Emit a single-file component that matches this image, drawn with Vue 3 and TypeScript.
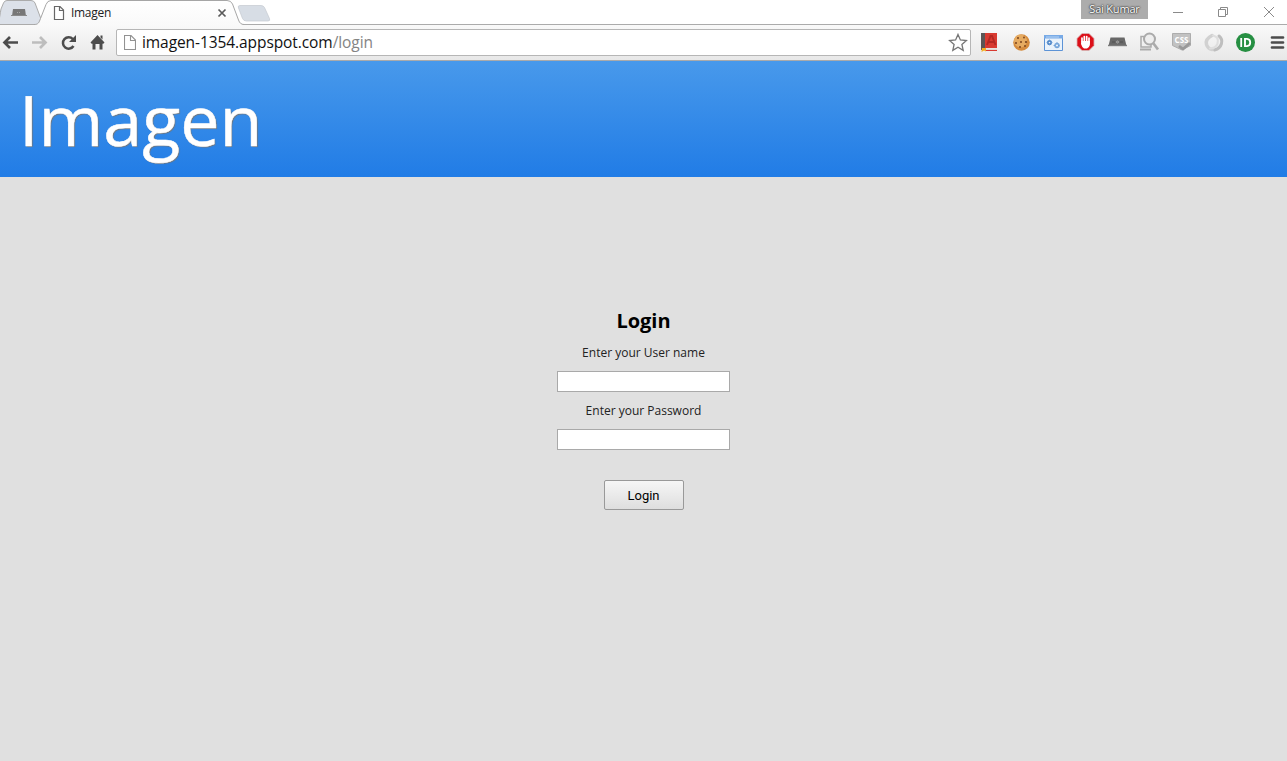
<script setup lang="ts">
import { ref } from 'vue'

const username = ref('')
const password = ref('')
</script>

<template>
  <div class="window">
    <div class="tabstrip">
      <svg class="tabs" width="290" height="26" viewBox="0 0 290 26" fill="none">
        <defs>
          <linearGradient id="activeTab" x1="0" y1="0" x2="0" y2="1">
            <stop offset="0" stop-color="#ffffff" />
            <stop offset="1" stop-color="#f9f9f9" />
          </linearGradient>
        </defs>
        <path d="M-4 24.500C-1 24.500 -1 20 1 9L3.500 3Q4.500.500 7 .500H31Q34 .500 35 3L41 19Q42 24 38 24.500Z" fill="#dce1e9" stroke="#ababab" />
        <path d="M238.500 8Q237.500 5.500 240 5.500H261Q263.500 5.500 264.500 7.500L269.500 18.500Q270.500 21 268 21H246.500Q243.500 21 242.500 18.500Z" fill="#d7dde5" stroke="#c4c9d0" stroke-width=".7" />
        <path d="M34 26V24.500C38.500 24.500 39 22.500 40.500 18.500L46 4.500Q47.500.500 51 .500H227Q231 .500 232.500 4L238.500 20Q240 24.500 244 24.500V26Z" fill="url(#activeTab)" />
        <path d="M34 24.500C38.500 24.500 39 22.500 40.500 18.500L46 4.500Q47.500.500 51 .500H227Q231 .500 232.500 4L238.500 20Q240 24.500 244 24.500" stroke="#a6a6a6" />
        <path d="M13 9H25L26 16H12Z" fill="#777" />
        <path d="M11 15.500H27" stroke="#898989" />
        <path d="M17 12.500H21" stroke="#a6a6a6" stroke-dasharray="1 1" />
        <path d="M54.500 6.500H60L63.500 10V19.500H54.500ZM59.500 6.500V10.500H63.500" fill="#fff" stroke="#666" stroke-width="1.200" />
        <path d="M218.500 9.500L225.500 16.500M225.500 9.500L218.500 16.500" stroke="#5a5a5a" stroke-width="1.700" />
      </svg>
      <span class="tab-title">Imagen</span>
      <span class="profile">Sai Kumar</span>
      <svg class="controls" width="139" height="24" viewBox="0 0 139 24" fill="none" stroke="#8a8a8a">
        <path d="M25 12.500H35M70.500 9.500H77.500V16.500H70.500ZM72.500 9.500V7.500H79.500V14.500H77.500M116 7L126 17M126 7L116 17" />
      </svg>
    </div>

    <div class="toolbar">
      <svg class="nav" width="116" height="34" viewBox="0 0 116 34" fill="none">
        <path d="M18 17.500H5M10 12L4.500 17.500L10 23" stroke="#4c4c4c" stroke-width="2.700" />
        <path d="M32 17.500H45M40 12L45.500 17.500L40 23" stroke="#bdbdbd" stroke-width="2.700" />
        <path d="M73.500 21A5.700 5.700 0 1 1 72.800 14" stroke="#4c4c4c" stroke-width="2.500" />
        <path d="M76 10V17H69Z" fill="#4c4c4c" />
        <path d="M97.500 10L104.500 17.500L103 19L102.500 18.500V24.500H99.500V19H95.500V24.500H92.500V18.500L92 19L90.500 17.500ZM100.500 10.500H102.500V14.500L100.500 12.500Z" fill="#4c4c4c" />
      </svg>
      <div class="address">
        <svg class="page-icon" width="12" height="15" viewBox="0 0 12 15" fill="#fff" stroke="#929292">
          <path d="M.5.5H7L11.500 5V14.500H.5ZM6.500.5V5.500H11.500" stroke-width="1.100" />
        </svg>
        <span class="url">imagen-1354.appspot.com<span class="path">/login</span></span>
        <svg class="star" width="20" height="19" viewBox="0 0 20 19" fill="none">
          <path d="M10 1.400L12.400 6.900L18.400 7.500L13.900 11.500L15.200 17.400L10 14.300L4.800 17.400L6.100 11.500L1.600 7.500L7.600 6.900Z" stroke="#767676" stroke-width="1.300" />
        </svg>
      </div>
      <svg class="extensions" width="316" height="34" viewBox="971 25 316 34" fill="none">
        <g>
          <path d="M981 33H997V48H981Z" fill="#d83a31" />
          <path d="M981 33H985V50H981Z" fill="#5b5555" />
          <path d="M985 48.500H997V50H985Z" fill="#e3d8d3" />
          <path d="M986 50.500H997" stroke="#d83a31" />
          <path d="M987 45L990.500 36H992L995.500 45M988.500 42H994" stroke="#b42823" stroke-width="1.900" />
          <path d="M982 48H986V51.500L984 50.500L981.500 52Z" fill="#f5ae20" />
        </g>
        <g>
          <circle cx="1021.500" cy="42.500" r="8.300" fill="#d58b3d" />
          <circle cx="1020.500" cy="41" r="6.500" fill="#e6ab61" />
          <g fill="#79421c">
            <circle cx="1018" cy="38" r="1" /><circle cx="1024" cy="37.500" r=".9" />
            <circle cx="1021" cy="42" r="1" /><circle cx="1026" cy="42" r="1.100" />
            <circle cx="1016" cy="43" r="1" /><circle cx="1020" cy="47" r="1" />
            <circle cx="1025" cy="46" r=".9" />
          </g>
        </g>
        <g>
          <path d="M1044.500 35.500H1062.500V50.500H1044.500Z" fill="#e9f2fb" stroke="#5c93d6" />
          <path d="M1044 35H1063V38.500H1044Z" fill="#78aae6" />
          <path d="M1046 37H1059" stroke="#b6d4f5" />
          <circle cx="1049.500" cy="42.500" r="1.700" stroke="#4e87c9" stroke-width="1.700" />
          <circle cx="1057" cy="45.500" r="1.900" stroke="#79a9dd" stroke-width="1.700" />
          <path d="M1046.500 42.500H1052.500M1049.500 39.500V45.500M1053.500 45.500H1060.500M1057 42V49" stroke="#6798d2" stroke-width=".8" stroke-dasharray="1.500 3" />
        </g>
        <g>
          <path d="M1082 33.500H1089L1094 38.500V45.500L1089 50.500H1082L1077 45.500V38.500Z" fill="#dc1019" stroke="#d6b2b2" stroke-width=".8" />
          <path d="M1082 41V38M1084.300 42V36.500M1086.700 42V36.500M1089 43V38" stroke="#fff" stroke-width="1.700" stroke-linecap="round" />
          <path d="M1081.200 41H1089.900V45Q1089 48 1087 48.500H1084Q1082 47.500 1081 44Z" fill="#fff" />
        </g>
        <g>
          <path d="M1110.500 37.500H1124.500L1126.500 46H1108.500Z" fill="#686868" />
          <path d="M1108 45.500H1127" stroke="#7c7c7c" stroke-width="1.400" />
          <circle cx="1117.500" cy="42" r="1" stroke="#b8b8b8" stroke-width=".8" />
          <path d="M1112 42H1115M1120 42H1123" stroke="#505050" />
        </g>
        <g stroke="#aaa">
          <path d="M1144 36.500H1141V47H1151V45" stroke-width="1.500" />
          <path d="M1140 49.500H1151" stroke-width="2" />
          <circle cx="1149.500" cy="39" r="5.500" fill="#eee" stroke-width="2" />
          <path d="M1153.500 43.500L1158 49.500" stroke-width="2.700" />
        </g>
        <g>
          <path d="M1172.500 33.500H1190.500V45.500L1182 50L1172.500 45.500Z" fill="#c2c2c2" stroke="#adadad" />
          <text x="1181.500" y="43" class="css-label">CSS</text>
          <path d="M1179 46L1183 49L1190 43" stroke="#999" stroke-width="2.800" />
        </g>
        <g stroke-linecap="round">
          <path d="M1219 36C1224 40 1222 48 1214.500 50" stroke="#bebebe" stroke-width="3" />
          <path d="M1212 35.500Q1205 39 1206.500 44.500Q1208 49 1212 49.500" stroke="#d1d1d1" stroke-width="3.500" />
          <path d="M1213 35.500Q1219.500 37 1217.500 43.500Q1216 48 1210 48.500" stroke="#dedede" stroke-width="2.200" />
        </g>
        <g>
          <circle cx="1245.500" cy="42.500" r="9.500" fill="#268f42" />
          <path d="M1241.200 38V47" stroke="#fff" stroke-width="1.800" />
          <path d="M1245 38.900H1247Q1250.200 39.200 1250.200 42.500T1247 46.100H1245Z" stroke="#fff" stroke-width="1.900" />
        </g>
        <path d="M1272 37.500H1283M1272 42.500H1283M1272 47.500H1283" stroke="#4b4b4b" stroke-width="2.700" stroke-linecap="round" />
      </svg>
    </div>

    <header class="banner"><h1>Imagen</h1></header>

    <main>
      <form @submit.prevent>
        <h2>Login</h2>
        <label for="username">Enter your User name</label>
        <input id="username" v-model="username" type="text">
        <label for="password">Enter your Password</label>
        <input id="password" v-model="password" type="password">
        <button type="submit">Login</button>
      </form>
    </main>
  </div>
</template>

<style>
body {
  margin: 0;
  background: #e0e0e0;
}
</style>

<style scoped>
.window {
  height: 761px;
  display: flex;
  flex-direction: column;
  overflow: hidden;
  background: #e0e0e0;
  font-family: "Open Sans", sans-serif;
}
svg {
  display: block;
  flex: none;
}
.tabstrip {
  position: relative;
  height: 25px;
  flex: none;
  display: flex;
  box-sizing: border-box;
  border-bottom: 1px solid #ababab;
  background: #fff;
}
.tabs {
  position: relative;
  z-index: 1;
}
.tab-title {
  position: absolute;
  z-index: 2;
  left: 71px;
  top: 4px;
  font: 12px/18px "Open Sans", sans-serif;
  letter-spacing: -.3px;
  color: #222;
}
.profile {
  width: 67px;
  height: 19px;
  margin-left: auto;
  background: #acacac;
  color: #fff;
  font-size: 11px;
  line-height: 18px;
  letter-spacing: -.2px;
  text-align: center;
  text-shadow: 0 0 1px #333, 0 0 2px #333, 0 0 2px #444;
}
.toolbar {
  height: 36px;
  flex: none;
  display: flex;
  box-sizing: border-box;
  border-bottom: 1px solid #aaa;
  background: linear-gradient(#f9f9f9, #e8e8e8);
}
.address {
  width: 855px;
  height: 27px;
  margin-top: 4px;
  display: flex;
  align-items: center;
  box-sizing: border-box;
  border: 1px solid #b6b6b6;
  border-radius: 2px;
  background: #fff;
}
.page-icon {
  margin-left: 7px;
}
.url {
  margin: 0 0 2px 6px;
  font-size: 15.500px;
  line-height: 24px;
  letter-spacing: -.08px;
  color: #111;
}
.path {
  color: #848484;
}
.star {
  margin: 0 2px 0 auto;
}
.css-label {
  fill: #fff;
  font: bold 8px "Open Sans", sans-serif;
  text-anchor: middle;
}
.banner {
  height: 116px;
  flex: none;
  background: linear-gradient(#4899eb, #217ce6);
}
h1 {
  margin: 0;
  padding: 11px 0 0 19px;
  color: #fff;
  font-size: 70px;
  line-height: 95px;
  font-weight: 400;
  -webkit-text-stroke: .5px #fff;
  text-shadow: 1px 1px 1px #777;
}
form {
  display: flex;
  flex-direction: column;
  align-items: center;
  padding-top: 130px;
}
h2 {
  margin: 0 0 9px;
  font-size: 20px;
  line-height: 28px;
  font-weight: 700;
  color: #000;
}
label {
  height: 18px;
  margin-bottom: 9px;
  font-size: 12px;
  line-height: 18px;
  color: #222;
}
input {
  width: 173px;
  height: 21px;
  margin: 0 0 10px;
  box-sizing: border-box;
  border: 1px solid #a9a9a9;
  border-radius: 0;
  background: #fff;
  outline: none;
}
button {
  width: 80px;
  height: 30px;
  margin-top: 20px;
  padding: 0;
  border: 1px solid #999;
  border-radius: 2px;
  background: linear-gradient(#f6f6f6, #dedede);
  color: #000;
  font: 13px Roboto, sans-serif;
}
</style>
